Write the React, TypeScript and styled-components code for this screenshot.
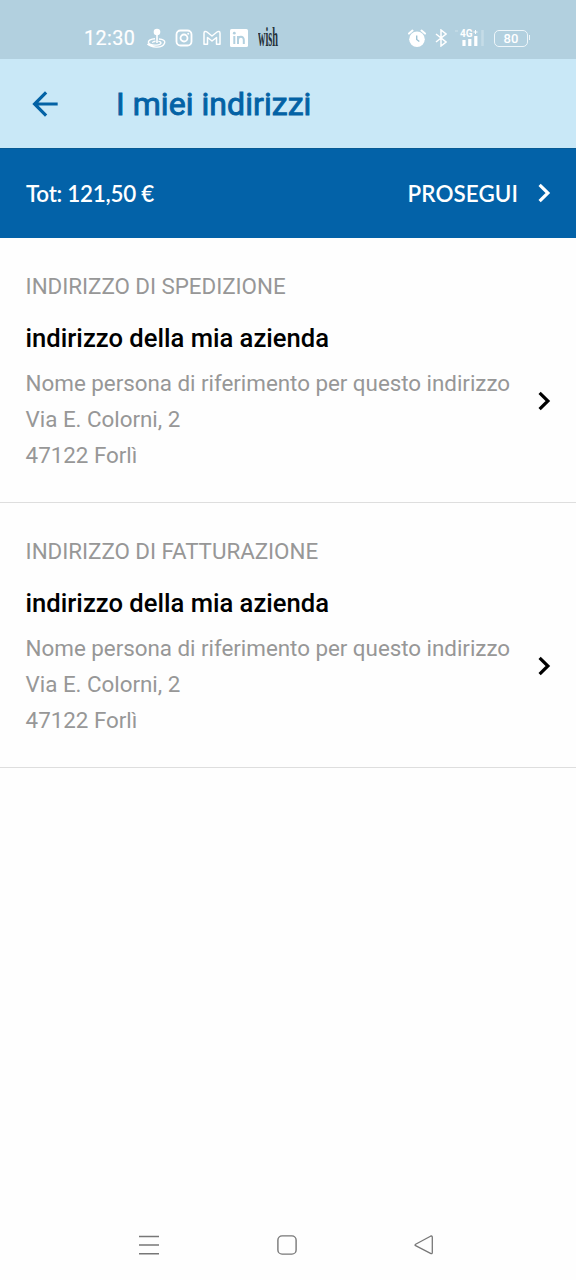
import React from "react";
import styled, { createGlobalStyle } from "styled-components";

const GlobalStyle = createGlobalStyle`
  * { box-sizing: border-box; }
  body { margin: 0; background: #fff; font-family: Roboto, "Liberation Sans", sans-serif; }
`;

const Screen = styled.div`
  width: 576px;
  height: 1280px;
  display: flex;
  flex-direction: column;
  background: #fefefe;
  overflow: hidden;
`;

const StatusBar = styled.div`
  height: 59px;
  padding: 17px 48px 0 84px;
  display: flex;
  justify-content: space-between;
  background: #b2d0df;
  color: #fff;
`;

const StatusGroup = styled.div<{ $gap: number }>`
  height: 42px;
  display: flex;
  align-items: center;
  align-self: flex-start;
  gap: ${(p) => p.$gap}px;
  svg { display: block; flex: none; }
`;

const Clock = styled.span`
  width: 52px;
  font-size: 19.8px;
  line-height: 42px;
  padding-top: 1px;
  letter-spacing: 0.4px;
  white-space: nowrap;
  -webkit-text-stroke: 0.2px #fff;
`;

const WishMark = styled.span`
  font: 700 22px/20px "Liberation Serif", serif;
  color: #26323a;
  width: 20px;
  white-space: nowrap;
  transform: scale(0.47, 1.2);
  transform-origin: 0 50%;
`;

const Battery = styled.span`
  position: relative;
  width: 34px;
  height: 17px;
  border: 1.5px solid #eef6fa;
  border-radius: 5px;
  font: 500 13px/15px Roboto, sans-serif;
  text-align: center;
  &::after {
    content: "";
    position: absolute;
    right: -3px;
    top: 4px;
    width: 1.5px;
    height: 5px;
    background: #eef6fa;
  }
`;

const AppBar = styled.header`
  height: 89px;
  padding-left: 26px;
  display: flex;
  align-items: center;
  gap: 52px;
  background: #c9e8f7;
  color: #0362a5;
`;

const Title = styled.h1`
  margin: 0;
  font-size: 32px;
  line-height: 40px;
  font-weight: 400;
  letter-spacing: 0.05px;
  white-space: nowrap;
  -webkit-text-stroke: 0.9px #0362a5;
`;

const TotalBar = styled.div`
  height: 90px;
  padding: 0 19px 1px 26px;
  display: flex;
  align-items: center;
  justify-content: space-between;
  background: #0362a8;
  border-top: 1px solid #075b94;
  color: #fff;
  font: 600 22.4px/28px Lato, sans-serif;
`;

const Total = styled.span`
  padding-top: 2px;
  letter-spacing: -0.26px;
`;

const Proceed = styled.span`
  display: flex;
  align-items: center;
  gap: 13px;
`;

const ProceedText = styled.span`
  padding-top: 2px;
  letter-spacing: 0.08px;
`;

const Address = styled.section`
  height: 265px;
  padding: 30px 19px 0 25.6px;
  border-bottom: 1px solid #dedede;
`;

const Label = styled.div`
  font-size: 22.4px;
  line-height: 36px;
  letter-spacing: -0.05px;
  color: #979797;
`;

const Name = styled.h2`
  margin: 14px 0 9px;
  font-size: 25.6px;
  line-height: 40px;
  font-weight: 500;
  color: #000;
`;

const Body = styled.div`
  display: flex;
  justify-content: space-between;
  align-items: flex-start;
`;

const Details = styled.div`
  margin-top: -2px;
  font-size: 22.4px;
  line-height: 36.2px;
  letter-spacing: -0.03px;
  color: #979797;
  white-space: nowrap;
`;

const ChevronSlot = styled.span`
  margin-top: 21px;
`;

const NavBar = styled.nav`
  margin-top: auto;
  height: 70px;
  padding: 0 142px 0 138px;
  display: flex;
  align-items: center;
  justify-content: space-between;
`;

const ChevronIcon = styled.svg`
  display: block;
`;

const Chevron = () => (
  <ChevronIcon width="26" height="26" viewBox="0 0 26 26" fill="none" stroke="currentColor" strokeWidth="3.2">
    <path d="M8.600 4.800 16.900 13 8.600 21.200" />
  </ChevronIcon>
);

const Joystick = () => (
  <svg width="20" height="21" viewBox="0 0 20 21" fill="none" stroke="#fff" strokeWidth="1.4">
    <circle cx="11" cy="4" r="3.3" fill="#fff" stroke="none" />
    <path d="M11 6v9" strokeWidth="1.6" />
    <path d="M13 11c4 .2 6.500 1.700 5.500 4.200-1 2.400-4.500 4.100-8.500 3.900-4-.1-6.800-1.300-8.600-3M9 10.800c-4 .2-7 1.700-6.500 3.700.5 1.800 4 2.800 7.800 2.600 2.900-.1 4.900-1 4.700-2.200-.1-.9-1.500-1.500-2.700-1.500M9.500 13.300c-1.800.1-3 .7-2.800 1.400" />
  </svg>
);

const Instagram = () => (
  <svg width="18" height="18" viewBox="0 0 18 18" fill="none" stroke="#fff" strokeWidth="1.8">
    <rect x="1.500" y="1.500" width="15" height="15" rx="4" />
    <circle cx="9" cy="9" r="3.500" />
    <circle cx="13.200" cy="4.800" r="1" fill="#fff" stroke="none" />
  </svg>
);

const Gmail = () => (
  <svg width="18" height="16" viewBox="0 0 18 16" fill="none" stroke="#fff" strokeWidth="1.500" strokeLinejoin="round">
    <path d="M1 14.200V3.200C1 1.500 2.600.900 4 2l5 4 5-4c1.400-1.100 3-.500 3 1.200v11h-3.500V7.500L9 11 4.500 7.500v6.700Z" />
  </svg>
);

const LinkedIn = () => (
  <svg width="18" height="18" viewBox="0 0 18 18">
    <rect width="18" height="18" rx="1.600" fill="#fff" />
    <path d="M4.300 7v8M8 15V7M8 11c0-4 5.800-4.500 5.800 0v4" fill="none" stroke="#b2d0df" strokeWidth="2" />
    <circle cx="4.300" cy="4.200" r="1.400" fill="#b2d0df" />
  </svg>
);

const Alarm = () => (
  <svg width="18" height="19" viewBox="0 0 18 19" fill="none">
    <circle cx="9" cy="10.300" r="7.800" fill="#fff" />
    <path d="m1 4.600 3.500-3M17 4.600l-3.500-3" stroke="#fff" strokeWidth="2" strokeLinecap="round" />
    <path d="M8.700 6.500v4l2.600 2" stroke="#9fc3d4" strokeWidth="1.400" />
  </svg>
);

const Bluetooth = () => (
  <svg width="12" height="18" viewBox="0 0 12 18" fill="none" stroke="#fff" strokeWidth="1.500">
    <path d="m1 5 10 8-5 4V1l5 4-10 8" />
  </svg>
);

const Signal = () => (
  <svg width="30" height="20" viewBox="0 0 30 20">
    <text x="5" y="9" fontFamily="Roboto, sans-serif" fontSize="10" fontWeight="700" fill="#fff">4G</text>
    <path d="M18.500 4h4M20.500 2v4" stroke="#fff" strokeWidth="1" />
    <path d="M9 18v-6M14.800 18v-7M20.800 18V8" stroke="#fff" strokeWidth="3.200" />
    <path d="M27.500 18V2" stroke="#fff" strokeOpacity=".25" strokeWidth="2.500" />
    <path d="M0 3h3" stroke="#fff" strokeOpacity=".25" strokeWidth="1.500" />
  </svg>
);

const BackArrow = () => (
  <svg width="38" height="38" viewBox="0 0 24 24" fill="currentColor">
    <path d="M20 11H7.830l5.590-5.590L12 4l-8 8 8 8 1.410-1.410L7.830 13H20v-2z" />
  </svg>
);

const Menu = () => (
  <svg width="22" height="22" viewBox="0 0 22 22" stroke="#777" strokeWidth="1.500">
    <path d="M1 2.500h20M1 11h20M1 19.700h20" />
  </svg>
);

const Home = () => (
  <svg width="20" height="20" viewBox="0 0 20 20" fill="none" stroke="#777" strokeWidth="1.400">
    <rect x=".9" y=".9" width="18.200" height="18.200" rx="4.200" />
  </svg>
);

const Back = () => (
  <svg width="20" height="20" viewBox="0 0 20 20" fill="none" stroke="#777" strokeWidth="1.300" strokeLinejoin="round">
    <path d="M1.600 9.200 16.500 1.200Q18.300.500 18.300 2.200V17.500Q18.300 19.300 16.500 18.400L1.600 10.700Q.4 10 1.600 9.200Z" />
  </svg>
);

const addresses = ["INDIRIZZO DI SPEDIZIONE", "INDIRIZZO DI FATTURAZIONE"];

export default function App() {
  return (
    <Screen>
      <GlobalStyle />
      <StatusBar>
        <StatusGroup $gap={9.5}>
          <Clock>12:30</Clock>
          <Joystick />
          <Instagram />
          <Gmail />
          <LinkedIn />
          <WishMark>wish</WishMark>
        </StatusGroup>
        <StatusGroup $gap={8.7}>
          <Alarm />
          <Bluetooth />
          <Signal />
          <Battery>80</Battery>
        </StatusGroup>
      </StatusBar>
      <AppBar>
        <BackArrow />
        <Title>I miei indirizzi</Title>
      </AppBar>
      <TotalBar>
        <Total>Tot: 121,50 €</Total>
        <Proceed>
          <ProceedText>PROSEGUI</ProceedText>
          <Chevron />
        </Proceed>
      </TotalBar>
      {addresses.map((label) => (
        <Address key={label}>
          <Label>{label}</Label>
          <Name>indirizzo della mia azienda</Name>
          <Body>
            <Details>
              <div>Nome persona di riferimento per questo indirizzo</div>
              <div>Via E. Colorni, 2</div>
              <div>47122 Forlì</div>
            </Details>
            <ChevronSlot>
              <Chevron />
            </ChevronSlot>
          </Body>
        </Address>
      ))}
      <NavBar>
        <Menu />
        <Home />
        <Back />
      </NavBar>
    </Screen>
  );
}
